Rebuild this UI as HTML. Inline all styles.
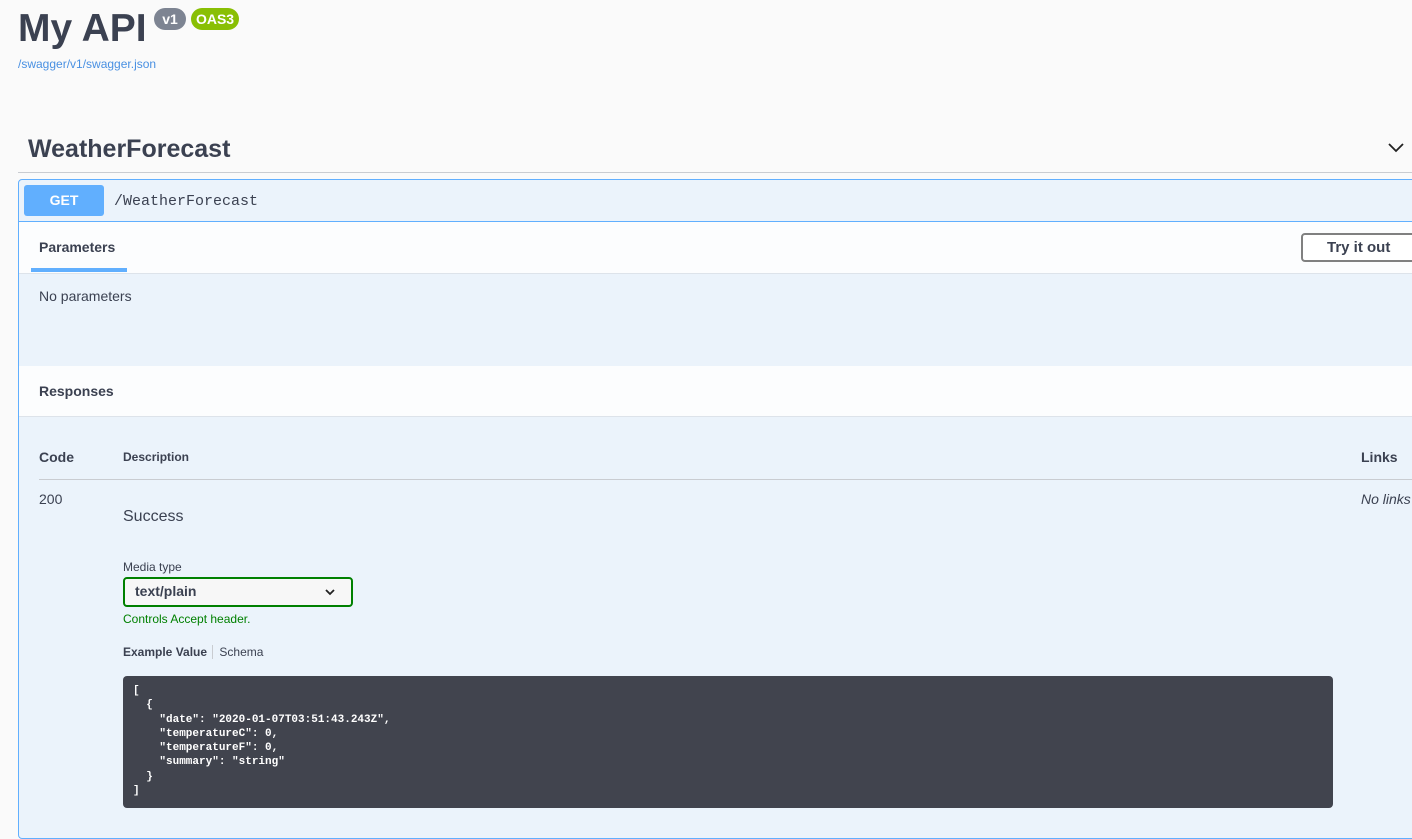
<!DOCTYPE html>
<html><head><style>
body{margin:0;background:#fafafa;font-family:"Liberation Sans",sans-serif;color:#3b4151;width:1412px;height:826px;overflow:hidden;position:relative}
.a{position:absolute;white-space:nowrap}
.b{font-weight:bold}
</style></head><body>
<div class="a b" style="left:18px;top:6px;font-size:39px;line-height:46px;color:#3b4151">My API</div>
<div class="a b" style="left:154px;top:8px;width:32px;height:22px;border-radius:11px;background:#7d8492;color:#fff;font-size:14px;line-height:22px;text-align:center">v1</div>
<div class="a b" style="left:191px;top:8px;width:48px;height:22px;border-radius:11px;background:#89bf04;color:#fff;font-size:14px;line-height:22px;text-align:center">OAS3</div>
<div class="a" style="left:18px;top:57px;font-size:12px;color:#4990e2">/swagger/v1/swagger.json</div>
<div class="a b" style="left:28px;top:134px;font-size:25px;line-height:30px">WeatherForecast</div>
<svg class="a" style="left:1386px;top:138px" width="20" height="20" viewBox="0 0 20 20"><path d="M3 6l7 7 7-7" fill="none" stroke="#222" stroke-width="1.8"/></svg>
<div class="a" style="left:18px;top:172px;width:1394px;height:1px;background:#c9ccd1"></div>
<div class="a" style="left:18px;top:179px;width:1400px;height:660px;border:1px solid #61affe;border-radius:4px;background:#ebf3fb;box-sizing:border-box"></div>
<div class="a b" style="left:24px;top:185px;width:80px;height:31px;background:#61affe;border-radius:3px;color:#fff;font-size:14px;line-height:31px;text-align:center">GET</div>
<div class="a" style="left:114px;top:193px;font-family:'Liberation Mono',monospace;font-size:15px;color:#3b4151">/WeatherForecast</div>
<div class="a" style="left:19px;top:221px;width:1393px;height:1px;background:#61affe"></div>
<div class="a" style="left:19px;top:222px;width:1393px;height:51px;background:#fcfdfe;border-bottom:1px solid #dde3ea"></div>
<div class="a b" style="left:39px;top:239px;font-size:14px">Parameters</div>
<div class="a" style="left:31px;top:268px;width:96px;height:4px;background:#61affe"></div>
<div class="a b" style="left:1301px;top:233px;width:130px;height:29px;border:2px solid #808080;border-radius:4px;box-sizing:border-box;background:#fff;font-size:15px;line-height:25px;padding-left:24px">Try it out</div>
<div class="a" style="left:39px;top:288px;font-size:14px">No parameters</div>
<div class="a" style="left:19px;top:366px;width:1393px;height:50px;background:#fcfdfe;border-bottom:1px solid #dde3ea"></div>
<div class="a b" style="left:39px;top:383px;font-size:14px">Responses</div>
<div class="a b" style="left:39px;top:449px;font-size:14px">Code</div>
<div class="a b" style="left:123px;top:450px;font-size:12px">Description</div>
<div class="a b" style="left:1361px;top:449px;font-size:14px">Links</div>
<div class="a" style="left:39px;top:479px;width:1373px;height:1px;background:#c9ccd1"></div>
<div class="a" style="left:39px;top:491px;font-size:14px">200</div>
<div class="a" style="left:1361px;top:491px;font-size:14px;font-style:italic">No links</div>
<div class="a" style="left:123px;top:508px;font-size:16px">Success</div>
<div class="a" style="left:123px;top:560px;font-size:12px">Media type</div>
<div class="a" style="left:123px;top:577px;width:230px;height:30px;border:2px solid #008000;border-radius:4px;box-sizing:border-box;background:#f7f7f7"></div>
<div class="a b" style="left:135px;top:583px;font-size:14px">text/plain</div>
<svg class="a" style="left:324px;top:586px" width="12" height="12" viewBox="0 0 12 12"><path d="M2 4l4 4 4-4" fill="none" stroke="#222" stroke-width="1.8"/></svg>
<div class="a" style="left:123px;top:612px;font-size:12px;color:#008000">Controls Accept header.</div>
<div class="a" style="left:123px;top:645px;font-size:12px"><b>Example Value</b> <span style="border-left:1px solid #c9ccd1;padding-left:6px;margin-left:2px">Schema</span></div>
<div class="a" style="left:123px;top:676px;width:1210px;height:132px;background:#41444e;border-radius:4px"></div>
<pre class="a b" style="left:133px;top:684px;margin:0;white-space:pre;font-family:'Liberation Mono',monospace;font-size:11px;line-height:14.3px;color:#fff">[
  {
    "date": "2020-01-07T03:51:43.243Z",
    "temperatureC": 0,
    "temperatureF": 0,
    "summary": "string"
  }
]</pre>
</body></html>
